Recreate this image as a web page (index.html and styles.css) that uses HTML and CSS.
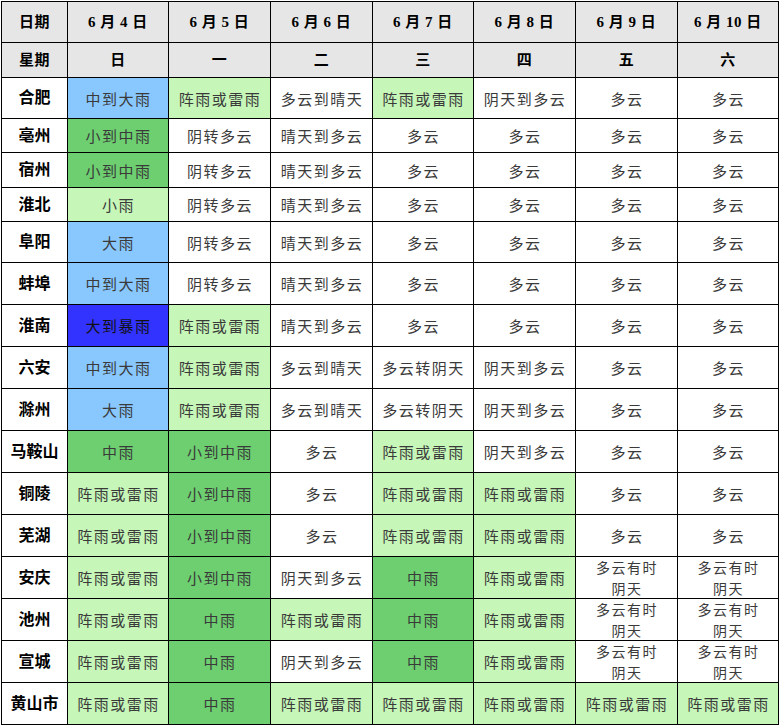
FILE: index.html
```html
<!DOCTYPE html>
<html lang="zh">
<head>
<meta charset="utf-8">
<title>天气预报</title>
<link rel="stylesheet" href="styles.css">
</head>
<body>
<table class="wx">
<colgroup>
<col class="c-city"><col class="c-w"><col class="c-x"><col class="c-x"><col class="c-w"><col class="c-x"><col class="c-x"><col class="c-w">
</colgroup>
<tr class="r40 head"><th>日期</th><th>6 月 4 日</th><th>6 月 5 日</th><th>6 月 6 日</th><th>6 月 7 日</th><th>6 月 8 日</th><th>6 月 9 日</th><th>6 月 10 日</th></tr>
<tr class="r34 head"><th>星期</th><th>日</th><th>一</th><th>二</th><th>三</th><th>四</th><th>五</th><th>六</th></tr>
<tr class="r40"><th>合肥</th><td class="blue">中到大雨</td><td class="lg">阵雨或雷雨</td><td>多云到晴天</td><td class="lg">阵雨或雷雨</td><td>阴天到多云</td><td>多云</td><td>多云</td></tr>
<tr class="r33"><th>亳州</th><td class="mg">小到中雨</td><td>阴转多云</td><td>晴天到多云</td><td>多云</td><td>多云</td><td>多云</td><td>多云</td></tr>
<tr class="r34"><th>宿州</th><td class="mg">小到中雨</td><td>阴转多云</td><td>晴天到多云</td><td>多云</td><td>多云</td><td>多云</td><td>多云</td></tr>
<tr class="r33"><th>淮北</th><td class="lg">小雨</td><td>阴转多云</td><td>晴天到多云</td><td>多云</td><td>多云</td><td>多云</td><td>多云</td></tr>
<tr class="r40"><th>阜阳</th><td class="blue">大雨</td><td>阴转多云</td><td>晴天到多云</td><td>多云</td><td>多云</td><td>多云</td><td>多云</td></tr>
<tr class="r41"><th>蚌埠</th><td class="blue">中到大雨</td><td>阴转多云</td><td>晴天到多云</td><td>多云</td><td>多云</td><td>多云</td><td>多云</td></tr>
<tr class="r41"><th>淮南</th><td class="dblue">大到暴雨</td><td class="lg">阵雨或雷雨</td><td>晴天到多云</td><td>多云</td><td>多云</td><td>多云</td><td>多云</td></tr>
<tr class="r41"><th>六安</th><td class="blue">中到大雨</td><td class="lg">阵雨或雷雨</td><td>多云到晴天</td><td>多云转阴天</td><td>阴天到多云</td><td>多云</td><td>多云</td></tr>
<tr class="r41"><th>滁州</th><td class="blue">大雨</td><td class="lg">阵雨或雷雨</td><td>多云到晴天</td><td>多云转阴天</td><td>阴天到多云</td><td>多云</td><td>多云</td></tr>
<tr class="r41"><th>马鞍山</th><td class="mg">中雨</td><td class="mg">小到中雨</td><td>多云</td><td class="lg">阵雨或雷雨</td><td>阴天到多云</td><td>多云</td><td>多云</td></tr>
<tr class="r41"><th>铜陵</th><td class="lg">阵雨或雷雨</td><td class="mg">小到中雨</td><td>多云</td><td class="lg">阵雨或雷雨</td><td class="lg">阵雨或雷雨</td><td>多云</td><td>多云</td></tr>
<tr class="r41"><th>芜湖</th><td class="lg">阵雨或雷雨</td><td class="mg">小到中雨</td><td>多云</td><td class="lg">阵雨或雷雨</td><td class="lg">阵雨或雷雨</td><td>多云</td><td>多云</td></tr>
<tr class="r41"><th>安庆</th><td class="lg">阵雨或雷雨</td><td class="mg">小到中雨</td><td>阴天到多云</td><td class="mg">中雨</td><td class="lg">阵雨或雷雨</td><td class="two">多云有时<br>阴天</td><td class="two">多云有时<br>阴天</td></tr>
<tr class="r41"><th>池州</th><td class="lg">阵雨或雷雨</td><td class="mg">中雨</td><td class="lg">阵雨或雷雨</td><td class="mg">中雨</td><td class="lg">阵雨或雷雨</td><td class="two">多云有时<br>阴天</td><td class="two">多云有时<br>阴天</td></tr>
<tr class="r41"><th>宣城</th><td class="lg">阵雨或雷雨</td><td class="mg">中雨</td><td>阴天到多云</td><td class="mg">中雨</td><td class="lg">阵雨或雷雨</td><td class="two">多云有时<br>阴天</td><td class="two">多云有时<br>阴天</td></tr>
<tr class="r41"><th>黄山市</th><td class="lg">阵雨或雷雨</td><td class="mg">中雨</td><td class="lg">阵雨或雷雨</td><td class="lg">阵雨或雷雨</td><td class="lg">阵雨或雷雨</td><td class="lg">阵雨或雷雨</td><td class="lg">阵雨或雷雨</td></tr>
</table>
</body>
</html>
```
FILE: styles.css
```css
html, body {
  margin: 0;
  padding: 0;
  background: #ffffff;
}

.wx {
  margin: 1px 0 0 1px;
  width: 778px;
  table-layout: fixed;
  border-collapse: separate;
  border-spacing: 1px;
  background: #000000;
  font-family: "Noto Sans CJK SC", "Liberation Sans", sans-serif;
}

.c-city { width: 65px; }
.c-w { width: 100px; }
.c-x { width: 101px; }

.wx th,
.wx td {
  padding: 0;
  text-align: center;
  vertical-align: middle;
  background: #ffffff;
  overflow: hidden;
  white-space: nowrap;
}

.wx th {
  font-family: "Liberation Serif", "Noto Sans CJK SC", serif;
  font-weight: 700;
  font-size: 16px;
  color: #000000;
  line-height: 18px;
}

.wx td {
  font-size: 15px;
  letter-spacing: 1.5px;
  color: #3a3a3a;
  line-height: 17px;
  padding-left: 1px;
}

.head th {
  background: #e6e6e6;
  font-size: 15px;
  letter-spacing: 0.5px;
}

.wx td.two {
  font-size: 14px;
  line-height: 20.5px;
  white-space: normal;
}

.r33 th, .r33 td { height: 33px; }
.r34 th, .r34 td { height: 34px; }
.r40 th, .r40 td { height: 40px; }
.r41 th, .r41 td { height: 41px; }

.wx td.blue { background: #88c8ff; }
.wx td.dblue { background: #3333ff; color: #111111; }
.wx td.lg { background: #c6f6b8; }
.wx td.mg { background: #6dcf70; }
```
